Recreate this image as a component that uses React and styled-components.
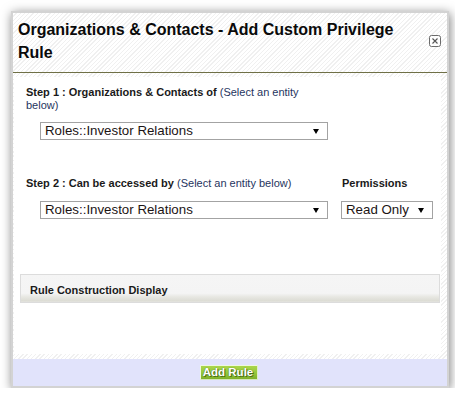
import React from "react";
import styled, { createGlobalStyle } from "styled-components";

const Global = createGlobalStyle`
  html, body { margin: 0; padding: 0; background: #fff; }
  body { font-family: "Liberation Sans", Arial, sans-serif; }
`;

const stripes = `repeating-linear-gradient(135deg, #ffffff 0px, #ffffff 2px, #f0f0f0 2px, #f0f0f0 3px)`;

const Dialog = styled.div`
  margin: 11px 0 0 11px;
  width: 438px;
  height: 377px;
  box-sizing: border-box;
  border: 2px solid #d3d3d3;
  background: ${stripes};
  box-shadow: 1px 2px 10px rgba(0, 0, 0, 0.5);
  display: flex;
  flex-direction: column;
`;

const Header = styled.div`
  height: 60px;
  box-sizing: border-box;
  padding: 5px 6px 8px 5px;
  border-bottom: 1px solid #6f7046;
  display: flex;
  align-items: center;
  gap: 8px;
`;

const Title = styled.h1`
  margin: 0;
  flex: 1;
  font-size: 16px;
  line-height: 23px;
  font-weight: bold;
  color: #0a0a0a;
`;

const CloseIcon = styled.svg`
  flex: none;
  display: block;
  width: 12px;
  height: 12px;
`;

const Content = styled.div`
  margin: 4px 6px 0 1px;
  height: 277px;
  background: #fff;
  box-sizing: border-box;
  padding: 9px 1px 0 6px;
  display: flex;
  flex-direction: column;
`;

const StepLabel = styled.div`
  width: ${(p) => p.$width || "auto"};
  margin-left: ${(p) => p.$indent ?? 6}px;
  font-size: 11px;
  line-height: 13px;
  color: #1a1a1a;
  b { font-weight: bold; }
`;

const Hint = styled.span`
  color: #1f3560;
`;

const Row = styled.div`
  display: flex;
  align-items: flex-start;
  margin-top: ${(p) => p.$top || 0}px;
`;

const Group = styled.div`
  width: ${(p) => (p.$width ? `${p.$width}px` : "auto")};
  display: flex;
  flex-direction: column;
  gap: 11px;
`;

const Select = styled.div`
  width: ${(p) => p.$width}px;
  height: 18px;
  margin-left: ${(p) => p.$indent || 0}px;
  margin-top: ${(p) => p.$top || 0}px;
  box-sizing: border-box;
  border: 1px solid #a3a3a3;
  background: #fff;
  display: flex;
  align-items: center;
  padding: 0 8px 0 4px;
  font-size: 13.3px;
  line-height: 16px;
  color: #1c1414;
  white-space: nowrap;
`;

const SelectText = styled.span`
  flex: 1;
`;

const Arrow = styled.span`
  width: 0;
  height: 0;
  border-left: 3px solid transparent;
  border-right: 3px solid transparent;
  border-top: 5px solid #000;
`;

const Panel = styled.div`
  margin-top: 55px;
  height: 29px;
  box-sizing: border-box;
  border: 1px solid #dcdcdc;
  background: linear-gradient(
    to bottom,
    #f5f5f5 0%,
    #f4f4f4 68%,
    #e8e8e3 80%,
    #dcdcd4 96%,
    #e6e6e2 100%
  );
  padding: 9px 9px 0 9px;
  font-size: 11px;
  line-height: 13px;
  font-weight: bold;
  color: #1a1a1a;
`;

const Footer = styled.div`
  margin-top: 5px;
  flex: 1;
  background: #e1e3fb;
  display: flex;
  align-items: center;
  justify-content: center;
`;

const Button = styled.button`
  height: 15px;
  width: 58px;
  margin: 0 0 0 -2px;
  padding: 0 2px 0 0;
  box-sizing: border-box;
  border: 1px solid #eef7dd;
  border-right-color: #dfeecb;
  border-bottom-color: #d5e6bd;
  background: linear-gradient(to bottom, #aad64b 0%, #95c63a 55%, #7fb02a 100%);
  color: #fff;
  font-family: "Liberation Sans", Arial, sans-serif;
  font-size: 11.5px;
  line-height: 13px;
  font-weight: bold;
  text-shadow: 0 0 1px #3d5d0c, 1px 1px 0 #4f7317;
  cursor: pointer;
`;

export default function App() {
  return (
    <>
      <Global />
      <Dialog>
        <Header>
          <Title>Organizations &amp; Contacts - Add Custom Privilege Rule</Title>
          <CloseIcon viewBox="0 0 12 12">
            <rect x="0.5" y="0.5" width="11" height="11" rx="2" fill="#fff" fillOpacity="0.6" stroke="#6b6b6b" strokeWidth="1" />
            <path d="M3.5 3.5 L8.5 8.5 M8.5 3.5 L3.5 8.5" stroke="#555" strokeWidth="1.1" />
          </CloseIcon>
        </Header>
        <Content>
          <StepLabel $width="285px">
            <b>Step 1 : Organizations &amp; Contacts of</b>{" "}
            <Hint>(Select an entity</Hint> <Hint>below)</Hint>
          </StepLabel>
          <Select $width={288} $indent={20} $top={10}>
            <SelectText>Roles::Investor Relations</SelectText>
            <Arrow />
          </Select>
          <Row $top={37}>
            <Group $width={321}>
              <StepLabel>
                <b>Step 2 : Can be accessed by</b>{" "}
                <Hint>(Select an entity below)</Hint>
              </StepLabel>
              <Select $width={288} $indent={20}>
                <SelectText>Roles::Investor Relations</SelectText>
                <Arrow />
              </Select>
            </Group>
            <Group>
              <StepLabel $indent={1}>
                <b>Permissions</b>
              </StepLabel>
              <Select $width={92}>
                <SelectText>Read Only</SelectText>
                <Arrow />
              </Select>
            </Group>
          </Row>
          <Panel>Rule Construction Display</Panel>
        </Content>
        <Footer>
          <Button>Add Rule</Button>
        </Footer>
      </Dialog>
    </>
  );
}
